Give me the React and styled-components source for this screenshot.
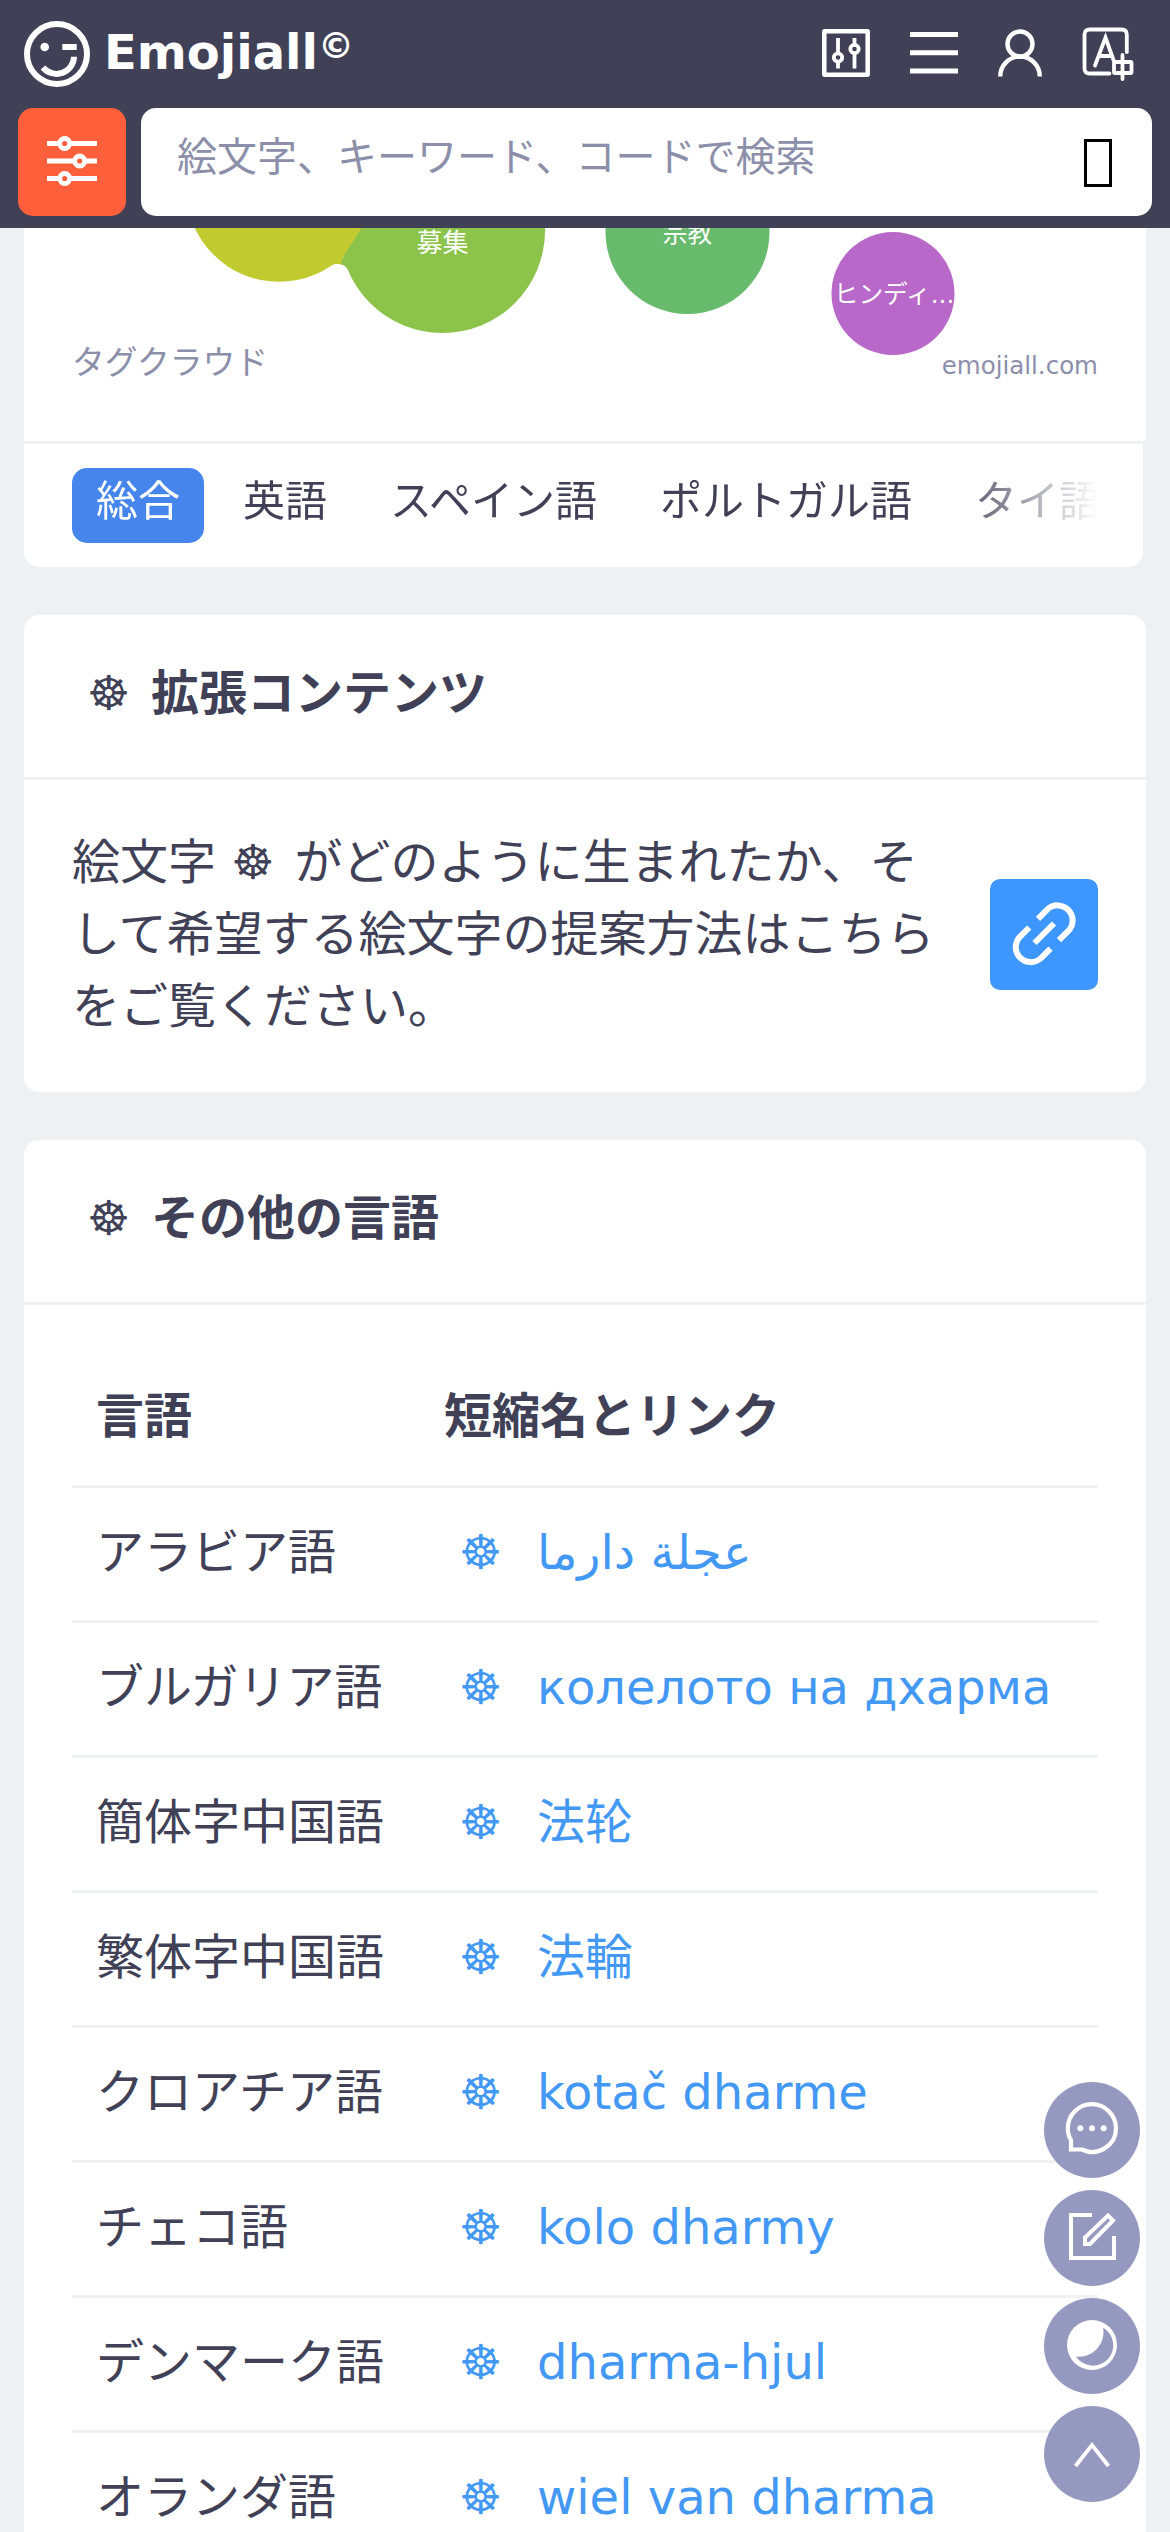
import React from "react";
import styled, { createGlobalStyle } from "styled-components";

const ink = "#404157";
const muted = "#8c8fa9";
const link = "#4398f3";
const line = "#eff1f2";

const GlobalStyle = createGlobalStyle`
  * { box-sizing: border-box; }
  html, body { margin: 0; }
  body {
    background: #edf1f4;
    color: ${ink};
    font-family: "DejaVu Sans", "Noto Sans CJK JP", sans-serif;
    font-size: 48px;
    line-height: 72px;
  }
`;

const Page = styled.div`
  width: 1170px;
  height: 2532px;
  overflow: hidden;
`;

const Header = styled.header`
  height: 228px;
  background: ${ink};
  color: #fff;
`;

const TopBar = styled.div`
  height: 108px;
  padding: 0 35px 0 24px;
  display: flex;
  align-items: center;
  justify-content: space-between;
`;

const Brand = styled.div`
  display: flex;
  align-items: center;
  font-weight: 700;
`;

const BrandName = styled.span`
  margin: -5px 0 0 14px;
  line-height: 72px;
`;

const Copyright = styled.span`
  font-size: 36px;
  line-height: 36px;
  margin: -16px 0 0 0;
`;

const Nav = styled.nav`
  display: flex;
  align-items: center;
  gap: 40px;
  margin-top: -3px;
  svg { display: block; }
  svg:last-child { margin-top: 3px; }
`;

const SearchBar = styled.div`
  display: flex;
  gap: 15px;
  padding: 0 18px;
`;

const FilterButton = styled.div`
  width: 108px;
  height: 108px;
  padding-bottom: 3px;
  border-radius: 15px;
  background: #ff603b;
  display: grid;
  place-items: center;
`;

const SearchBox = styled.div`
  flex: 1;
  height: 108px;
  border-radius: 15px;
  background: #fff;
  color: ${muted};
  font-size: 40px;
  display: flex;
  align-items: center;
  justify-content: space-between;
  padding: 0 40px 0 36px;
`;

const Placeholder = styled.span`
  margin-top: -10px;
`;

const MissingGlyph = styled.span`
  width: 28px;
  height: 48px;
  margin-top: 2px;
  border: 3px solid #000;
`;

const Main = styled.main`
  display: flex;
  flex-direction: column;
  gap: 48px;
  padding: 0 24px;
`;

const Card = styled.section`
  background: #fff;
  border-radius: 15px;
`;

const CloudGroup = styled.section``;

const CloudPanel = styled.div`
  height: 213px;
  background: #fff;
`;

const Tabs = styled.div`
  width: 1119px;
  height: 126px;
  border-top: 3px solid ${line};
  border-radius: 0 0 15px 15px;
  background: #fff;
  padding: 24px 45px 24px 48px;
`;

const TabScroller = styled.div`
  display: flex;
  gap: 15px;
  overflow: hidden;
  width: 1026px;
  mask-image: linear-gradient(to right, #000 876px, transparent 1026px);
`;

const Tab = styled.span`
  flex: none;
  height: 75px;
  padding: 0 24px;
  border-radius: 15px;
  font-size: 42px;
  line-height: 67px;
  color: ${(p) => (p.$active ? "#fff" : ink)};
  background: ${(p) => (p.$active ? "#4585ec" : "transparent")};
`;

const CardHeader = styled.h2`
  margin: 0;
  height: 165px;
  padding: 42px 0 0 48px;
  border-bottom: 3px solid ${line};
  font-size: 48px;
  font-weight: 700;
  display: flex;
`;

const Wheel = styled.span`
  display: inline-block;
  flex: none;
  width: ${(p) => p.$width}px;
  margin-right: ${(p) => p.$after}px;
  text-align: center;
  font-weight: 400;
`;

const CardBody = styled.div`
  display: flex;
  align-items: center;
  justify-content: space-between;
  padding: 46px 48px 50px;
`;

const Paragraph = styled.p`
  margin: 0;
  width: 882px;
`;

const LinkButton = styled.a`
  width: 108px;
  height: 111px;
  border-radius: 10px;
  background: #3d97ff;
  display: grid;
  place-items: center;
`;

const Table = styled.div`
  padding: 48px;
`;

const Row = styled.div`
  display: grid;
  grid-template-columns: 348px 1fr;
  height: 135px;
  border-bottom: 3px solid ${line};
  padding-top: ${(p) => (p.$head ? 27 : 28)}px;
  font-weight: ${(p) => (p.$head ? 700 : 400)};
`;

const Cell = styled.div`
  padding: 0 0 0 24px;
  white-space: nowrap;
`;

const NameLink = styled.a`
  color: ${link};
  display: flex;
`;

const FloatingActions = styled.div`
  position: fixed;
  right: 30px;
  top: 2082px;
  display: flex;
  flex-direction: column;
  gap: 12px;
`;

const RoundButton = styled.div`
  width: 96px;
  height: 96px;
  border-radius: 50%;
  background: #9599bf;
  svg { display: block; }
`;

const stroke = { fill: "none", stroke: "#fff" };

const Logo = () => (
  <svg width="66" height="68" viewBox="0 0 66 68" {...stroke} strokeWidth="6">
    <circle cx="33" cy="34" r="30" />
    <circle cx="20.700" cy="27" r="4.300" fill="#fff" stroke="none" />
    <path d="M38.300 27H52.700" />
    <path d="M19 47.500A17.500 17.500 0 0 0 50 36.800" />
  </svg>
);

const PanelIcon = () => (
  <svg width="48" height="48" viewBox="0 0 48 48" {...stroke} strokeWidth="4.500">
    <rect x="2.300" y="2.300" width="43.400" height="43.400" rx="0.500" />
    <g strokeWidth="3.800">
      <path d="M16 9V24M16 33V39.500M32.500 9V15M32.500 24V39.500" />
      <circle cx="16" cy="28.500" r="4.200" />
      <circle cx="32.500" cy="20" r="4.200" />
    </g>
  </svg>
);

const MenuIcon = () => (
  <svg width="48" height="42" viewBox="0 0 48 42" {...stroke} strokeWidth="5">
    <path d="M0 2.500H48M0 20.700H48M0 38.900H48" />
  </svg>
);

const UserIcon = () => (
  <svg width="44" height="48" viewBox="0 0 44 48" {...stroke} strokeWidth="4.400">
    <circle cx="22" cy="15" r="12.500" />
    <path d="M2.200 47.500A19.800 20 0 0 1 41.800 47.500" />
  </svg>
);

const TranslateIcon = () => (
  <svg width="53" height="54" viewBox="0 0 53 54" {...stroke} strokeWidth="3.800" strokeLinecap="round">
    <path d="M27.500 46.500H7.500C4 46.500 2.500 44.500 2.500 41.500V7.500C2.500 4 4.500 2.500 7.500 2.500H39.500C43 2.500 44.800 4 44.800 7.500V25" />
    <path d="M13 38.500L23.500 10.500L31.500 33M17 29H29" />
    <rect x="32" y="35" width="17.500" height="11" rx="1" />
    <path d="M40.500 28V52" />
  </svg>
);

const FilterIcon = () => (
  <svg width="52" height="52" viewBox="0 0 52 52" {...stroke} strokeWidth="4.800">
    <path d="M1 8.500H13M24 8.500H51M1 26H28M39 26H51M1 43.500H13M24 43.500H51" />
    <circle cx="18.700" cy="8.500" r="5" />
    <circle cx="33.700" cy="26" r="5" />
    <circle cx="18.700" cy="43.500" r="5" />
  </svg>
);

const ChainIcon = () => (
  <svg width="68" height="68" viewBox="0 0 68 68" {...stroke} strokeWidth="6">
    <path d="M28 18.800L37.400 9.400A15 15 0 0 1 58.600 30.600L49 40.200" />
    <path d="M40.500 48.600L31 58.100A15 15 0 0 1 9.800 36.900L19.200 27.500" />
    <path d="M24.500 43L44 23.500" />
  </svg>
);

const CommentIcon = () => (
  <svg width="96" height="96" viewBox="0 0 96 96" {...stroke} strokeWidth="4.200">
    <path d="M27 58V67.500H38C53 75 72 64 72 46.500C72 33 61 22.200 47.800 22.200C34.500 22.200 23.800 33 23.800 46.500C23.800 51 25 55 27 58Z" />
    <g fill="#fff" stroke="none">
      <circle cx="36.300" cy="46.300" r="3" />
      <circle cx="48" cy="46.300" r="3" />
      <circle cx="59.700" cy="46.300" r="3" />
    </g>
  </svg>
);

const EditIcon = () => (
  <svg width="96" height="96" viewBox="0 0 96 96" {...stroke} strokeWidth="4">
    <path d="M48 25H27V68H70V46" />
    <path d="M41 54V47.500L64 25.500L69 30.500L46 54Z" />
  </svg>
);

const MoonIcon = () => (
  <svg width="96" height="96" viewBox="0 0 96 96">
    <circle cx="48" cy="47" r="25" fill="#fff" />
    <path d="M59.300 29.700A20.400 20.400 0 1 1 32 58.700A25 25 0 0 0 59.300 29.700Z" fill="#9599bf" />
  </svg>
);

const UpIcon = () => (
  <svg width="96" height="96" viewBox="0 0 96 96" {...stroke} strokeWidth="3.800">
    <path d="M31.500 60L48 39L64.500 60" />
  </svg>
);

const TagCloud = () => (
  <svg width="1122" height="213" viewBox="24 228 1122 213">
    <circle cx="279" cy="189" r="92.800" fill="#c1cb30" />
    <circle cx="442.500" cy="230.500" r="102.500" fill="#8cc34a" />
    <path d="M325 269Q334 262 343 265L343 257L362 228L330 228Z" fill="#c1cb30" />
    <path d="M343 258L362 228L372 228L352 278Q348 266 341 264Z" fill="#8cc34a" />
    <circle cx="687.500" cy="232" r="82" fill="#68bb6c" />
    <circle cx="893" cy="293.500" r="61.500" fill="#b868c8" />
    <g fill="#fff" textAnchor="middle" fontSize="24.700">
      <text x="442.500" y="252" fontSize="26">募集</text>
      <text x="687.500" y="242">宗教</text>
      <text x="894" y="303">ヒンディ...</text>
    </g>
    <g fill={muted}>
      <text x="72" y="373.500" fontSize="32.800">タグクラウド</text>
      <text x="1098" y="374" fontSize="24.500" textAnchor="end">emojiall.com</text>
    </g>
  </svg>
);

const tabs = ["総合", "英語", "スペイン語", "ポルトガル語", "タイ語"];

const languages = [
  ["アラビア語", "عجلة دارما"],
  ["ブルガリア語", "колелото на дхарма"],
  ["簡体字中国語", "法轮"],
  ["繁体字中国語", "法輪"],
  ["クロアチア語", "kotač dharme"],
  ["チェコ語", "kolo dharmy"],
  ["デンマーク語", "dharma-hjul"],
  ["オランダ語", "wiel van dharma"],
];

export default function App() {
  return (
    <Page>
      <GlobalStyle />
      <Header>
        <TopBar>
          <Brand>
            <Logo />
            <BrandName>Emojiall</BrandName>
            <Copyright>©</Copyright>
          </Brand>
          <Nav>
            <PanelIcon />
            <MenuIcon />
            <UserIcon />
            <TranslateIcon />
          </Nav>
        </TopBar>
        <SearchBar>
          <FilterButton><FilterIcon /></FilterButton>
          <SearchBox>
            <Placeholder>絵文字、キーワード、コードで検索</Placeholder>
            <MissingGlyph />
          </SearchBox>
        </SearchBar>
      </Header>
      <Main>
        <CloudGroup>
          <CloudPanel><TagCloud /></CloudPanel>
          <Tabs>
            <TabScroller>
              {tabs.map((name, i) => (
                <Tab key={name} $active={i === 0}>{name}</Tab>
              ))}
            </TabScroller>
          </Tabs>
        </CloudGroup>
        <Card>
          <CardHeader><Wheel $width={73} $after={6}>☸</Wheel>拡張コンテンツ</CardHeader>
          <CardBody>
            <Paragraph>
              絵文字 <Wheel $width={43} $after={5}>☸</Wheel> がどのように生まれたか、そして希望する絵文字の提案方法はこちらをご覧ください。
            </Paragraph>
            <LinkButton><ChainIcon /></LinkButton>
          </CardBody>
        </Card>
        <Card>
          <CardHeader><Wheel $width={73} $after={6}>☸</Wheel>その他の言語</CardHeader>
          <Table>
            <Row $head>
              <Cell>言語</Cell>
              <Cell>短縮名とリンク</Cell>
            </Row>
            {languages.map(([language, name]) => (
              <Row key={language}>
                <Cell>{language}</Cell>
                <Cell>
                  <NameLink><Wheel $width={73} $after={20}>☸</Wheel><span>{name}</span></NameLink>
                </Cell>
              </Row>
            ))}
          </Table>
        </Card>
      </Main>
      <FloatingActions>
        <RoundButton><CommentIcon /></RoundButton>
        <RoundButton><EditIcon /></RoundButton>
        <RoundButton><MoonIcon /></RoundButton>
        <RoundButton><UpIcon /></RoundButton>
      </FloatingActions>
    </Page>
  );
}
